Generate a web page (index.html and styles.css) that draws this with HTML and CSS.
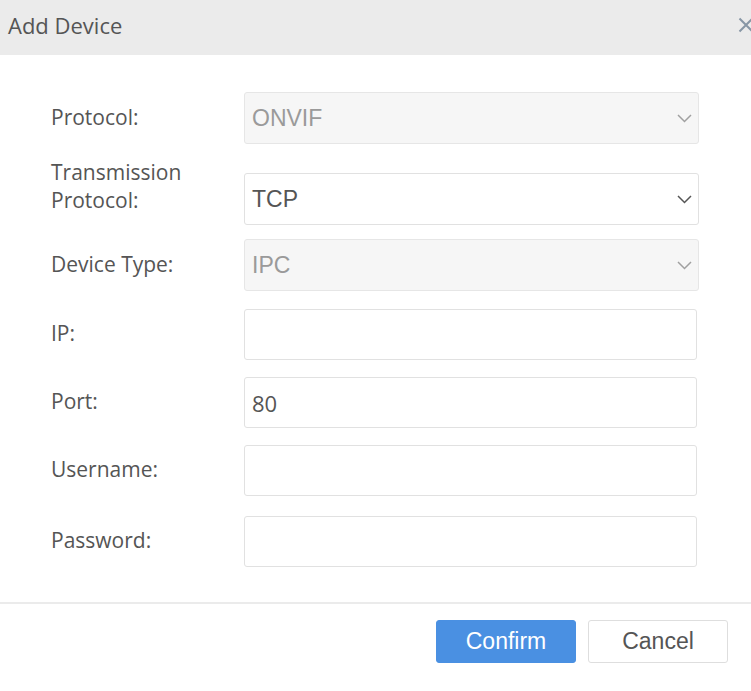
FILE: index.html
```html
<!DOCTYPE html>
<html lang="en">
<head>
    <meta charset="UTF-8">
    <meta name="viewport" content="width=device-width, initial-scale=1.0">
    <title>Add Device</title>
    <link rel="stylesheet" href="styles.css">
</head>
<body>
    <div class="dialog">
        <header class="dialog-header">
            <h1>Add Device</h1>
            <button class="close-btn" type="button" aria-label="Close">
                <svg width="16" height="16" viewBox="0 0 16 16">
                    <path d="M1.5 1.5 L14.5 14.5 M14.5 1.5 L1.5 14.5" stroke="#8796a5" stroke-width="2" fill="none"/>
                </svg>
            </button>
        </header>

        <form class="dialog-body">
            <div class="form-row gap-lg">
                <label class="form-label">Protocol:</label>
                <div class="select disabled">
                    <span>ONVIF</span>
                    <svg class="chevron" width="15" height="9" viewBox="0 0 15 9"><path d="M1 1 L7.5 7.5 L14 1" /></svg>
                </div>
            </div>

            <div class="form-row gap-sm">
                <label class="form-label two-line">Transmission Protocol:</label>
                <div class="select">
                    <span>TCP</span>
                    <svg class="chevron" width="15" height="9" viewBox="0 0 15 9"><path d="M1 1 L7.5 7.5 L14 1" /></svg>
                </div>
            </div>

            <div class="form-row gap-md">
                <label class="form-label">Device Type:</label>
                <div class="select disabled">
                    <span>IPC</span>
                    <svg class="chevron" width="15" height="9" viewBox="0 0 15 9"><path d="M1 1 L7.5 7.5 L14 1" /></svg>
                </div>
            </div>

            <div class="form-row">
                <label class="form-label">IP:</label>
                <input class="text-input" type="text">
            </div>

            <div class="form-row">
                <label class="form-label">Port:</label>
                <input class="text-input" type="text" value="80">
            </div>

            <div class="form-row gap-xl">
                <label class="form-label">Username:</label>
                <input class="text-input" type="text">
            </div>

            <div class="form-row last">
                <label class="form-label">Password:</label>
                <input class="text-input" type="password">
            </div>
        </form>

        <footer class="dialog-footer">
            <button class="btn btn-primary" type="button">Confirm</button>
            <button class="btn" type="button">Cancel</button>
        </footer>
    </div>
</body>
</html>
```

FILE: styles.css
```css
body, html {
    margin: 0;
    padding: 0;
    background-color: #fff;
    overflow: hidden;
    font-family: 'Open Sans', 'Liberation Sans', sans-serif;
}

.dialog {
    width: 751px;
}

/* 标题栏 */
.dialog-header {
    height: 55px;
    background-color: #ebebeb;
    display: flex;
    align-items: center;
    justify-content: space-between;
    padding: 0 8px;
}

.dialog-header h1 {
    margin: 0 0 6px 0;
    font-size: 22px;
    font-weight: normal;
    color: #555;
}

.close-btn {
    border: none;
    background: none;
    padding: 0;
    margin: 0 -11px 5px 0;
    width: 16px;
    height: 16px;
    cursor: pointer;
    display: flex;
}

/* 表单区域 */
.dialog-body {
    padding: 37px 0 0 51px;
    margin: 0;
}

.form-row {
    display: flex;
    align-items: center;
    margin-bottom: 17px;
}

.form-row.gap-lg {
    margin-bottom: 29px;
}

.form-row.gap-sm {
    margin-bottom: 14px;
}

.form-row.gap-md {
    margin-bottom: 18px;
}

.form-row.gap-xl {
    margin-bottom: 20px;
}

.form-row.last {
    margin-bottom: 0;
}

.form-label {
    width: 193px;
    flex-shrink: 0;
    font-size: 21px;
    line-height: 28px;
    padding-bottom: 3px;
    color: #555;
}

.form-label.two-line {
    width: 150px;
    margin-top: -24px; /* 两行标签略微上移 */
    margin-right: 43px;
}

.select {
    position: relative;
    box-sizing: border-box;
    width: 455px;
    height: 52px;
    border: 1px solid #e1e1e1;
    border-radius: 3px;
    background-color: #fff;
    display: flex;
    align-items: center;
    padding-left: 7px;
    font-family: 'Liberation Sans', Arial, sans-serif;
    font-size: 23px;
    color: #555;
}

.select.disabled {
    background-color: #f6f6f6;
    border-color: #e6e6e6;
    color: #9a9a9a;
}

.chevron {
    position: absolute;
    right: 6px;
    top: 21px;
}

.chevron path {
    fill: none;
    stroke: #555;
    stroke-width: 1.5;
}

.select.disabled .chevron path {
    stroke: #a0a0a0;
}

.text-input {
    box-sizing: border-box;
    width: 453px;
    height: 51px;
    border: 1px solid #e1e1e1;
    border-radius: 3px;
    padding: 0 7px;
    font-family: 'Open Sans', 'Liberation Sans', sans-serif;
    font-size: 22px;
    color: #555;
    outline: none;
}

/* 底部按钮 */
.dialog-footer {
    margin-top: 35px;
    border-top: 2px solid #ebebeb;
    padding: 16px 23px 0 0;
    display: flex;
    justify-content: flex-end;
    gap: 12px;
}

.btn {
    width: 140px;
    height: 43px;
    border: 1px solid #dedede;
    border-radius: 3px;
    background-color: #fff;
    color: #555;
    font-family: 'Liberation Sans', Arial, sans-serif;
    font-size: 23px;
    cursor: pointer;
    padding: 0;
}

.btn-primary {
    background-color: #4a90e2;
    border-color: #4a90e2;
    color: #fff;
}
```
